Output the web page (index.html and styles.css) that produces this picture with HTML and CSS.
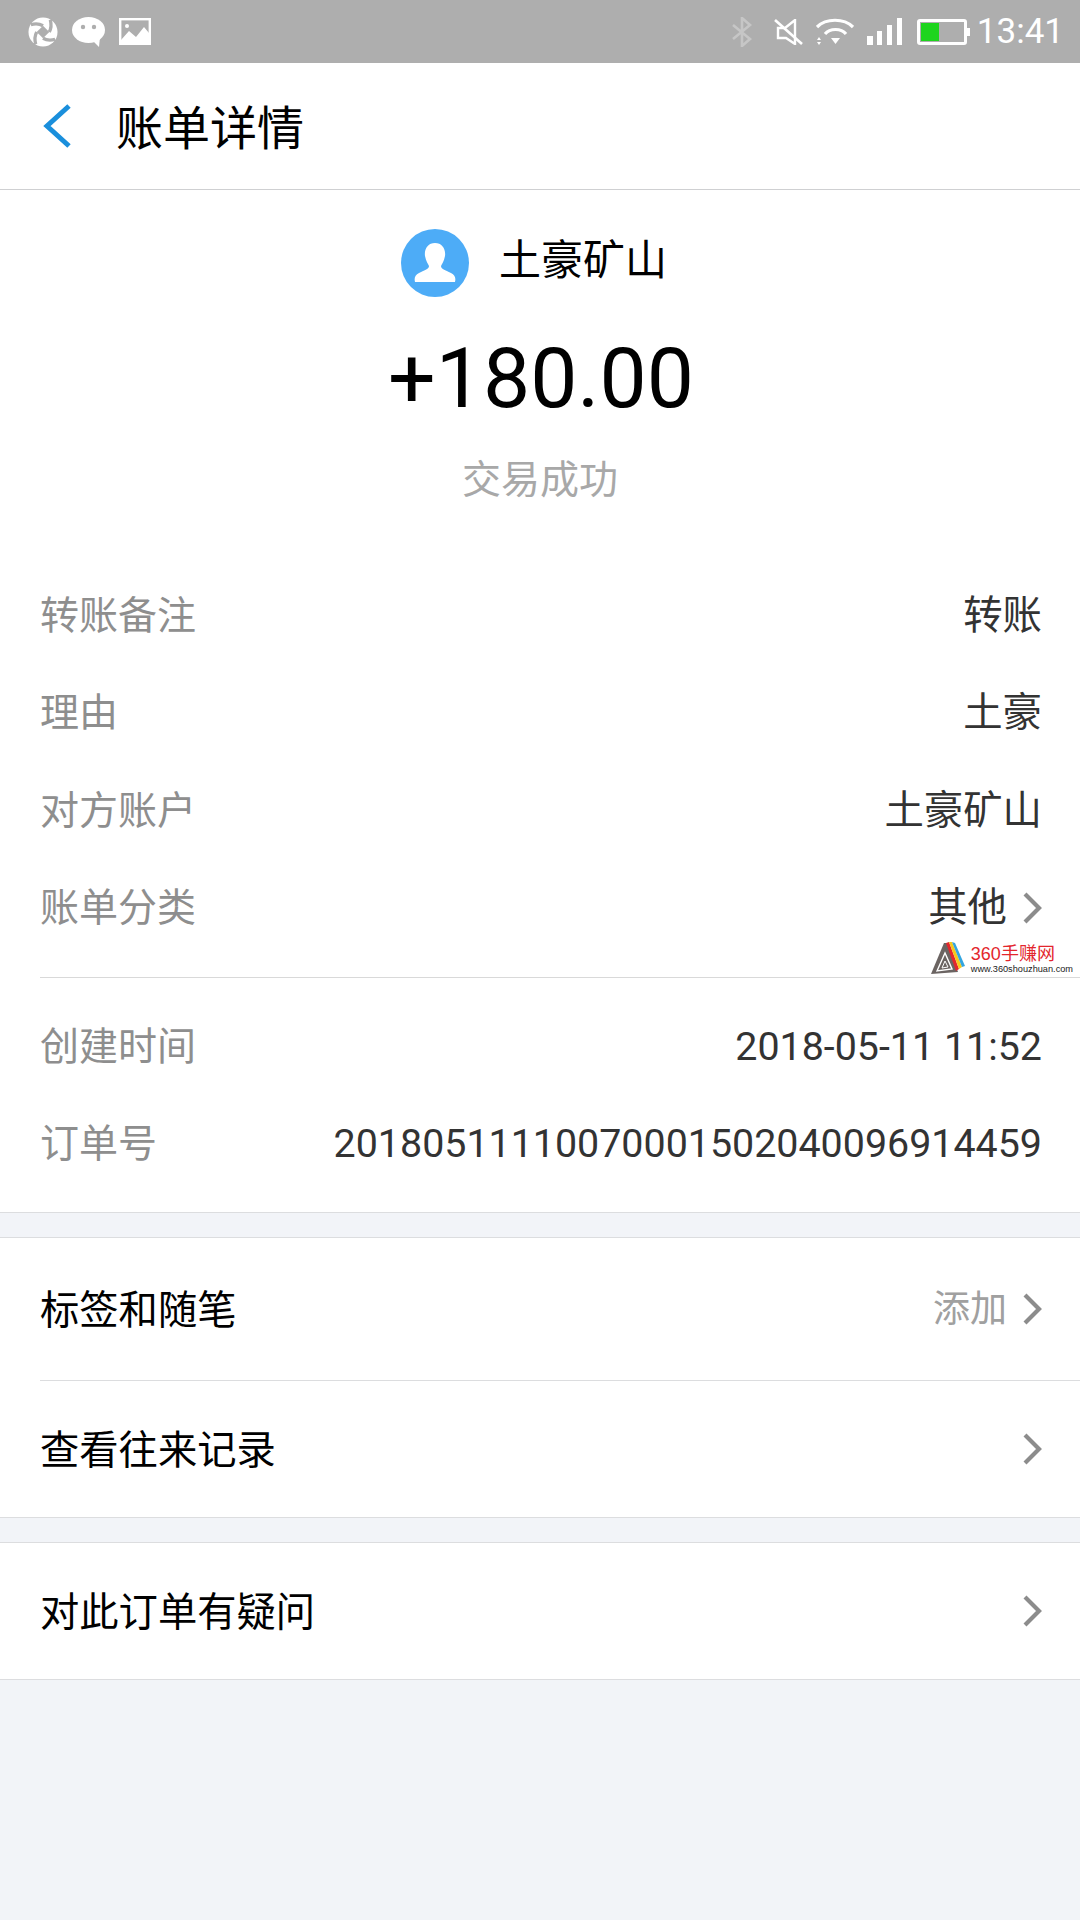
FILE: index.html
```html
<!DOCTYPE html>
<html lang="zh-CN">
<head>
  <meta charset="UTF-8" />
  <title>账单详情</title>
  <link rel="stylesheet" href="styles.css">
</head>
<body>
  <div class="status-bar">
    <div class="status-left">
      <svg width="30" height="30" viewBox="0 0 31 31">
        <circle cx="15.5" cy="15.5" r="15" fill="#fff"/>
        <g fill="none" stroke="#aeaeae" stroke-width="3.4">
          <path d="M15.5 9 Q10 6 3 8"/>
          <path d="M22 15.5 Q25 10 23 3"/>
          <path d="M15.5 22 Q21 25 28 23"/>
          <path d="M9 15.5 Q6 21 8 28"/>
        </g>
        <path d="M15.5 9 L22 15.5 L15.5 22 L9 15.5 Z" fill="#aeaeae"/>
      </svg>
      <svg width="33" height="30" viewBox="0 0 33 30">
        <ellipse cx="16.5" cy="13" rx="16.5" ry="13" fill="#fff"/>
        <path d="M20 23 L28 20 L27 30 Z" fill="#fff"/>
        <circle cx="11" cy="10" r="2.2" fill="#aeaeae"/>
        <circle cx="22" cy="10" r="2.2" fill="#aeaeae"/>
      </svg>
      <svg width="32" height="27" viewBox="0 0 32 27">
        <rect x="1.2" y="1.2" width="29.6" height="24.6" fill="none" stroke="#fff" stroke-width="2.4"/>
        <path d="M2 25 L2 22 L10 13 L17 19 L25 9 L30 15 L30 25 Z" fill="#fff"/>
        <circle cx="8" cy="8" r="2" fill="#fff"/>
      </svg>
    </div>
    <div class="status-right">
      <svg class="icon-bt" width="22" height="30" viewBox="0 0 22 30">
        <path d="M2 8 L19 22 L11 29 L11 1 L19 8 L2 22" fill="none" stroke="#c6c6c6" stroke-width="2.6"/>
      </svg>
      <svg class="icon-mute" width="29" height="26" viewBox="0 0 29 26">
        <path d="M4 9 L4 19 L12 19 L21 25 L21 1 L11 9 Z" fill="none" stroke="#fff" stroke-width="2.4"/>
        <path d="M1 1 L28 25" stroke="#fff" stroke-width="2.6"/>
      </svg>
      <svg class="icon-wifi" width="38" height="28" viewBox="0 0 38 28">
        <path d="M1 9 C10 0 28 0 37 9" fill="none" stroke="#fff" stroke-width="3.2"/>
        <path d="M9 16 C14 10 25 10 30 16" fill="none" stroke="#fff" stroke-width="3.2"/>
        <path d="M15 20 L24 20 L19.5 26 Z" fill="#fff"/>
        <path d="M1 22 L3 19 L5 22 Z M1 24 L5 24 L3 27 Z" fill="#fff"/>
      </svg>
      <div class="signal">
        <span class="bar-1"></span><span class="bar-2"></span><span class="bar-3"></span><span class="bar-4"></span>
      </div>
      <div class="battery"><div class="battery-fill"></div></div>
      <span class="clock">13:41</span>
    </div>
  </div>

  <header class="title-bar">
    <svg class="back" width="30" height="44" viewBox="0 0 30 44">
      <path d="M27 2 L5 22 L27 42" fill="none" stroke="#1a8fdc" stroke-width="5"/>
    </svg>
    <h1>账单详情</h1>
  </header>

  <section class="summary">
    <div class="payer">
      <svg class="avatar" width="68" height="68" viewBox="0 0 68 68">
        <circle cx="34" cy="34" r="34" fill="#4dacf7"/>
        <path d="M34 14 C41 14 45 20 44 27 C43 32 41 35 40 37 C40 40 44 41 50 44 C54 46 55 49 54 53 L14 53 C13 49 14 46 18 44 C24 41 28 40 28 37 C27 35 25 32 24 27 C23 20 27 14 34 14 Z" fill="#fff"/>
      </svg>
      <span class="payer-name">土豪矿山</span>
    </div>
    <div class="amount">+180.00</div>
    <div class="trade-status">交易成功</div>
  </section>

  <section class="details details-first">
    <div class="row"><span class="label">转账备注</span><span class="value">转账</span></div>
    <div class="row"><span class="label">理由</span><span class="value">土豪</span></div>
    <div class="row"><span class="label">对方账户</span><span class="value">土豪矿山</span></div>
    <div class="row"><span class="label">账单分类</span>
      <span class="value with-arrow">其他
        <svg class="arrow" width="20" height="34" viewBox="0 0 20 34"><path d="M3 3 L17 17 L3 31" fill="none" stroke="#8c8c8c" stroke-width="4.2"/></svg>
      </span>
    </div>
    <div class="watermark">
      <svg width="36" height="33" viewBox="0 0 36 33">
        <path d="M2 32 L15 1 L19 1 L29 30 Z" fill="#6b6462"/>
        <path d="M8 29 L16 11 L23 27 Z" fill="none" stroke="#fff" stroke-width="1.4"/>
        <path d="M13 26 L16 19 L19 25 Z" fill="none" stroke="#fff" stroke-width="1"/>
        <path d="M17 1 L20 0 L30 27 L27 29 Z" fill="#e3262d"/>
        <path d="M20 0 L23 0 L33 25 L30 27 Z" fill="#f6c81c"/>
        <path d="M23 0 L26 1 L36 24 L33 25 Z" fill="#33a5df"/>
      </svg>
      <div class="watermark-text">
        <span class="watermark-name">360手赚网</span>
        <span class="watermark-url">www.360shouzhuan.com</span>
      </div>
    </div>
  </section>

  <section class="details details-second">
    <div class="row"><span class="label">创建时间</span><span class="value">2018-05-11 11:52</span></div>
    <div class="row"><span class="label">订单号</span><span class="value">20180511110070001502040096914459</span></div>
  </section>

  <section class="group">
    <div class="link-row link-row-first">
      <span class="link-text">标签和随笔</span>
      <span class="link-extra"><span class="link-text">添加</span>
        <svg class="arrow" width="20" height="34" viewBox="0 0 20 34"><path d="M3 3 L17 17 L3 31" fill="none" stroke="#8c8c8c" stroke-width="4.2"/></svg>
      </span>
    </div>
    <div class="link-row link-row-second">
      <span class="link-text">查看往来记录</span>
      <svg class="arrow" width="20" height="34" viewBox="0 0 20 34"><path d="M3 3 L17 17 L3 31" fill="none" stroke="#8c8c8c" stroke-width="4.2"/></svg>
    </div>
  </section>

  <section class="group">
    <div class="link-row link-row-last">
      <span class="link-text">对此订单有疑问</span>
      <svg class="arrow" width="20" height="34" viewBox="0 0 20 34"><path d="M3 3 L17 17 L3 31" fill="none" stroke="#8c8c8c" stroke-width="4.2"/></svg>
    </div>
  </section>
</body>
</html>
```

FILE: styles.css
```css
* {
  box-sizing: border-box;
}

body {
  margin: 0;
  width: 1080px;
  height: 1920px;
  overflow: hidden;
  background: #f2f4f8;
  font-family: Roboto, "Noto Sans CJK SC", sans-serif;
  color: #000;
}

.status-bar {
  height: 63px;
  background: #aeaeae;
  display: flex;
  align-items: center;
  justify-content: space-between;
  padding: 0 16px 0 28px;
}

.status-left {
  display: flex;
  align-items: center;
  gap: 14px;
}

.status-right {
  display: flex;
  align-items: center;
}

.icon-bt {
  margin-right: 21px;
}

.icon-mute {
  margin-right: 13px;
}

.icon-wifi {
  margin-right: 13px;
}

.signal {
  display: flex;
  align-items: flex-end;
  gap: 4.5px;
  height: 27px;
  margin-right: 15px;
}

.signal span {
  width: 5.25px;
  background: #fff;
}

.bar-1 { height: 9px; }
.bar-2 { height: 14px; }
.bar-3 { height: 20px; }
.bar-4 { height: 27px; }

.battery {
  position: relative;
  width: 50px;
  height: 26px;
  border: 3px solid #fff;
  border-radius: 3px;
  padding: 1px;
  margin-right: 10px;
}

.battery::after {
  content: "";
  position: absolute;
  right: -6px;
  top: 6px;
  width: 3px;
  height: 8px;
  background: #fff;
}

.battery-fill {
  width: 18px;
  height: 100%;
  background: #1ed51e;
}

.clock {
  font-size: 35px;
  color: #fff;
}

.title-bar {
  height: 127px;
  background: #fff;
  border-bottom: 1px solid #cfd0d2;
  display: flex;
  align-items: center;
  padding-left: 42px;
}

.back {
  margin-right: 44px;
}

.title-bar h1 {
  margin: 0 0 3px;
  font-size: 47px;
  font-weight: 400;
}

.summary {
  background: #fff;
  height: 377px;
  display: flex;
  flex-direction: column;
  align-items: center;
  padding-top: 39px;
}

.payer {
  display: flex;
  align-items: center;
  gap: 30px;
  height: 68px;
  margin-right: 12px;
}

.payer-name {
  font-size: 42px;
  padding-bottom: 14px;
}

.amount {
  font-size: 84px;
  line-height: 100px;
  margin-top: 32px;
  margin-left: 2px;
}

.trade-status {
  font-size: 39px;
  line-height: 50px;
  margin-top: 26px;
  color: #a8a8a8;
}

.details {
  position: relative;
  background: #fff;
  padding-left: 40px;
}

.details-first::after {
  content: "";
  display: block;
  height: 1px;
  margin-top: 20px;
  background: #d9d9d9;
}

.row {
  height: 97.5px;
  display: flex;
  align-items: center;
  justify-content: space-between;
  padding-right: 38px;
  font-size: 39px;
  line-height: 60px;
}

.label {
  color: #8e8e8e;
}

.value {
  color: #333;
  font-size: 39.4px;
}

.with-arrow,
.link-extra {
  display: flex;
  align-items: center;
  gap: 15px;
}

.arrow {
  display: block;
}

.watermark {
  position: absolute;
  right: 7px;
  bottom: 3px;
  display: flex;
  align-items: flex-end;
  gap: 6px;
  background: #fff;
}

.watermark-text {
  display: flex;
  flex-direction: column;
  font-family: "Liberation Sans", "Noto Sans CJK SC", sans-serif;
}

.watermark-name {
  font-size: 18px;
  line-height: 20px;
  color: #e3262d;
}

.watermark-url {
  font-size: 9.2px;
  line-height: 11px;
  color: #222;
}

.details-second {
  padding-top: 20px;
  padding-bottom: 19px;
  border-bottom: 1px solid #dcdddf;
}

.group {
  background: #fff;
  margin-top: 24px;
  border-top: 1px solid #dcdddf;
  border-bottom: 1px solid #dcdddf;
  padding-left: 40px;
}

.link-row {
  display: flex;
  align-items: center;
  justify-content: space-between;
  padding-right: 38px;
  font-size: 39.3px;
}

.link-text {
  padding-bottom: 6px;
}

.link-row-first {
  height: 143px;
  border-bottom: 1px solid #dcdddf;
}

.link-row-second {
  height: 136px;
}

.link-row-last {
  height: 136px;
}

.link-extra {
  font-size: 37px;
  color: #a0a0a0;
}
```
